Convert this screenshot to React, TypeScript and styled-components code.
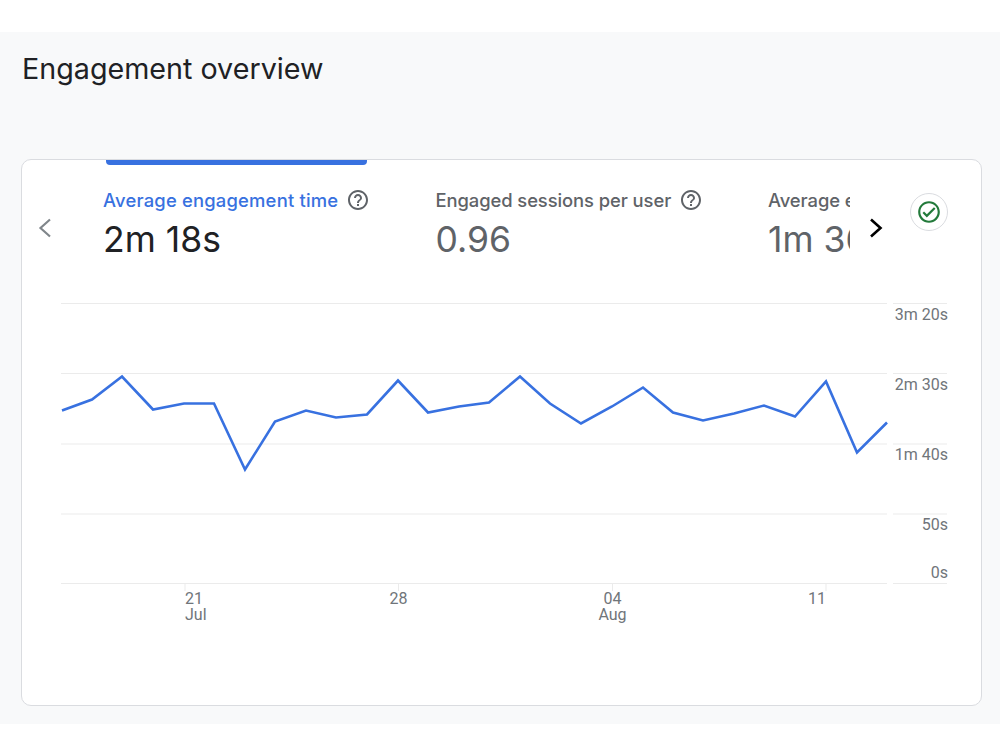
import React from "react";
import styled, { createGlobalStyle } from "styled-components";
import { MdOutlineHelpOutline, MdOutlineCheckCircle } from "react-icons/md";

const metrics = [
    { label: "Average engagement time", value: "2m 18s", active: true },
    { label: "Engaged sessions per user", value: "0.96", active: false },
    { label: "Average engagement time per session", value: "1m 36s", active: false },
];

const linePoints = [
    [62, 410], [92, 399], [122, 376], [153, 409], [184, 403], [214, 403], [245, 469],
    [275, 421], [306, 410], [336, 417], [367, 414], [398, 380], [428, 412], [459, 406],
    [489, 402], [520, 376], [550, 403], [581, 423], [612, 406], [643, 387], [673, 412],
    [703, 420], [734, 413], [764, 405], [795, 416], [826, 381], [857, 452], [887, 422],
];

const yAxis = [
    { y: 303.5, label: "3m 20s", labelY: 320 },
    { y: 373.5, label: "2m 30s", labelY: 389.5 },
    { y: 444, label: "1m 40s", labelY: 460 },
    { y: 514, label: "50s", labelY: 530 },
    { y: 583.5, label: "0s", labelY: 577.5 },
];

const xAxis = [
    { x: 185, day: "21", month: "Jul", anchor: "start" as const },
    { x: 398.5, day: "28", month: "", anchor: "middle" as const },
    { x: 612.5, day: "04", month: "Aug", anchor: "middle" as const },
    { x: 826, day: "11", month: "", anchor: "end" as const },
];

const App = () => {
    return (
        <>
            <GlobalStyle />
            <Section>
                <Title>Engagement overview</Title>
                <Card>
                    <CardHeader>
                        <NavButton $dark={false}>
                            <svg width="14" height="22" viewBox="0 0 14 22" fill="none">
                                <polyline points="12,2.5 2.5,11 12,19.5" stroke="currentColor" strokeWidth="2.2" />
                            </svg>
                        </NavButton>
                        <Tabs>
                            {metrics.map((metric) => (
                                <Tab key={metric.label} $active={metric.active}>
                                    <TabLabel $active={metric.active}>
                                        <span>{metric.label}</span>
                                        <MdOutlineHelpOutline size={24} />
                                    </TabLabel>
                                    <TabValue>{metric.value}</TabValue>
                                </Tab>
                            ))}
                        </Tabs>
                        <NavButton $dark={true}>
                            <svg width="14" height="22" viewBox="0 0 14 22" fill="none">
                                <polyline points="2,2.5 11.5,11 2,19.5" stroke="currentColor" strokeWidth="2.6" />
                            </svg>
                        </NavButton>
                        <StatusBadge>
                            <MdOutlineCheckCircle size={26} />
                        </StatusBadge>
                    </CardHeader>
                    <Chart viewBox="0 0 960 400" width="960" height="400">
                        {/* svg origin is page (22, 290) */}
                        <g transform="translate(-22 -290)">
                            {yAxis.map((tick) => (
                                <g key={tick.label}>
                                    <GridLine x1={61} x2={887} y1={tick.y} y2={tick.y} />
                                    <GridLine x1={893} x2={947} y1={tick.y} y2={tick.y} />
                                    <AxisText x={948} y={tick.labelY} textAnchor="end">
                                        {tick.label}
                                    </AxisText>
                                </g>
                            ))}
                            {xAxis.map((tick) => (
                                <g key={tick.day}>
                                    <GridLine x1={tick.x} x2={tick.x} y1={583} y2={591} />
                                    <AxisText x={tick.x} y={604} textAnchor={tick.anchor}>
                                        {tick.day}
                                        {tick.month && (
                                            <tspan x={tick.x} dy={16}>
                                                {tick.month}
                                            </tspan>
                                        )}
                                    </AxisText>
                                </g>
                            ))}
                            <DataLine
                                transform="translate(0 0.5)"
                                points={linePoints.map((p) => p.join(",")).join(" ")}
                            />
                        </g>
                    </Chart>
                </Card>
            </Section>
        </>
    );
};

export default App;

const GlobalStyle = createGlobalStyle`
    html, body {
        margin: 0;
        padding: 0;
        background: #ffffff;
        font-family: Roboto, "Liberation Sans", sans-serif;
    }
`;

const Section = styled.section`
    box-sizing: border-box;
    margin-top: 32px;
    height: 692px;
    padding: 18px 18px 0 21px;
    background: #f8f9fa;
`;

const Title = styled.h1`
    margin: 0 0 0 1px;
    height: 109px;
    font-family: Inter, sans-serif;
    font-size: 28.7px;
    line-height: 38px;
    font-weight: 400;
    color: #202124;
`;

const Card = styled.div`
    box-sizing: border-box;
    width: 961px;
    height: 547px;
    background: #ffffff;
    border: 1px solid #dadce0;
    border-radius: 10px;
    overflow: hidden;
`;

const CardHeader = styled.div`
    display: flex;
    align-items: flex-start;
    height: 130px;
`;

const NavButton = styled.div<{ $dark: boolean }>`
    display: flex;
    justify-content: center;
    box-sizing: border-box;
    width: ${(p) => (p.$dark ? "60px" : "81px")};
    padding-top: 57px;
    padding-right: ${(p) => (p.$dark ? "8px" : "35px")};
    color: ${(p) => (p.$dark ? "#000000" : "#80868b")};
`;

const Tabs = styled.div`
    display: flex;
    width: 747px;
    height: 100px;
    overflow: hidden;
`;

const Tab = styled.div<{ $active: boolean }>`
    position: relative;
    flex: 0 0 332.5px;
    box-sizing: border-box;
    padding-top: 27px;
    color: ${(p) => (p.$active ? "#202124" : "#5f6368")};

    &::before {
        content: "";
        display: ${(p) => (p.$active ? "block" : "none")};
        position: absolute;
        top: 0;
        left: 3px;
        width: 261px;
        height: 5px;
        background: #3871e0;
        border-radius: 0 0 4px 4px;
    }
`;

const TabLabel = styled.div<{ $active: boolean }>`
    display: flex;
    align-items: center;
    gap: 8px;
    height: 26px;
    font-family: Inter, sans-serif;
    font-size: 18.4px;
    line-height: 26px;
    font-weight: 500;
    letter-spacing: ${(p) => (p.$active ? "0.2px" : "-0.08px")};
    color: #5f6368;
    white-space: nowrap;

    span {
        color: ${(p) => (p.$active ? "#3871e0" : "#5f6368")};
    }
`;

const TabValue = styled.div`
    margin-top: 4px;
    font-family: Inter, sans-serif;
    font-size: 35.5px;
    line-height: 46px;
    font-weight: 400;
    white-space: nowrap;
`;

const StatusBadge = styled.div`
    display: flex;
    align-items: center;
    justify-content: center;
    box-sizing: border-box;
    width: 38px;
    height: 38px;
    margin: 33px 0 0 0;
    border: 1px solid #dadce0;
    border-radius: 50%;
    color: #237a3b;
`;

const Chart = styled.svg`
    display: block;
`;

const GridLine = styled.line`
    stroke: #ebebeb;
    stroke-width: 1;
`;

const AxisText = styled.text`
    font-family: Roboto, sans-serif;
    font-size: 16px;
    fill: #70757a;
`;

const DataLine = styled.polyline`
    fill: none;
    stroke: #3871e0;
    stroke-width: 2.6;
    stroke-linejoin: miter;
`;
